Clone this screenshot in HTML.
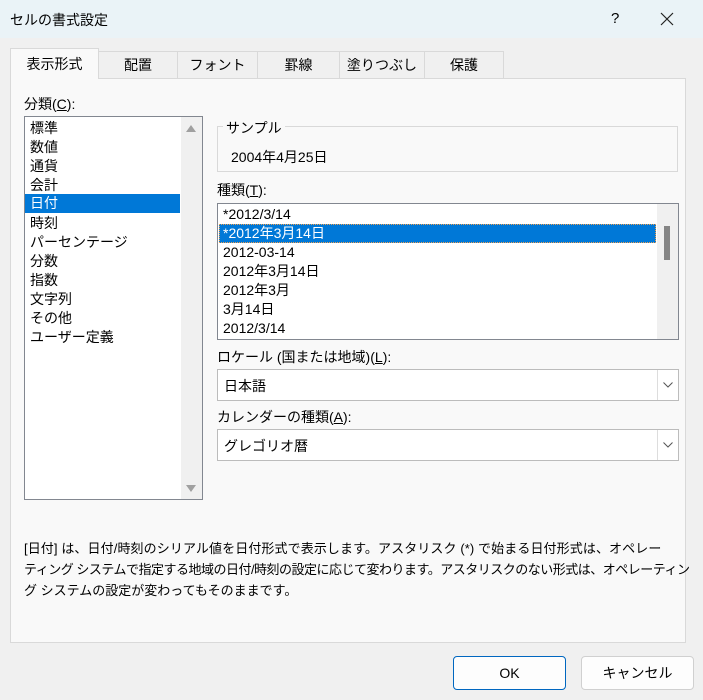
<!DOCTYPE html>
<html><head><meta charset="utf-8"><style>
*{box-sizing:border-box;margin:0;padding:0}
body{width:703px;height:700px;overflow:hidden;background:#f0f0f0;font-family:"Liberation Sans","Noto Sans CJK JP",sans-serif;font-size:14px;color:#000;position:relative}
.a{position:absolute}
.title{left:0;top:0;width:703px;height:38px;background:#eaf3f7}
.tab{top:51px;height:27px;border:1px solid #d9d9d9;border-bottom:none;background:#f0f0f0;text-align:center;line-height:27px;font-size:14px}
.panel{left:10px;top:78px;width:676px;height:565px;background:#f9f9f9;border:1px solid #d9d9d9}
.lst{background:#fff;border:1px solid #828790}
.it{position:absolute;left:5px;height:19px;line-height:19px;white-space:nowrap}
.sel{background:#0078d7;color:#fff}
.btn{top:656px;height:34px;border:1px solid #d0d0d0;background:#fdfdfd;border-radius:4px;text-align:center;line-height:32px}
.combo{left:217px;width:462px;height:32px;background:#fff;border:1px solid #bcbcbc}
</style></head><body>
<div class="a title"></div>
<div class="a" style="left:10px;top:10px;font-size:14px">セルの書式設定</div>
<div class="a" style="left:611px;top:10px;font-size:15px">?</div>
<svg class="a" style="left:660px;top:12px" width="14" height="14"><path d="M1 1L13 13M13 1L1 13" stroke="#222" stroke-width="1.2"/></svg>
<div class="a panel"></div>
<div class="a tab" style="left:98px;width:80px">配置</div>
<div class="a tab" style="left:177px;width:81px">フォント</div>
<div class="a tab" style="left:257px;width:83px">罫線</div>
<div class="a tab" style="left:339px;width:86px">塗りつぶし</div>
<div class="a tab" style="left:424px;width:80px">保護</div>
<div class="a tab" style="left:10px;top:48px;width:89px;height:31px;background:#f9f9f9;line-height:31px">表示形式</div>
<div class="a" style="left:24px;top:94px">分類(<u>C</u>):</div>
<div class="a lst" style="left:24px;top:116px;width:179px;height:384px">
<div class="a" style="left:156px;top:0;width:21px;height:382px;background:#f0f0f0"></div>
<div class="a" style="left:161px;top:8px;width:0;height:0;border-left:5px solid transparent;border-right:5px solid transparent;border-bottom:7px solid #a0a0a0"></div>
<div class="a" style="left:161px;top:368px;width:0;height:0;border-left:5px solid transparent;border-right:5px solid transparent;border-top:7px solid #a0a0a0"></div>
<div class="it" style="top:2px">標準</div>
<div class="it" style="top:21px">数値</div>
<div class="it" style="top:40px">通貨</div>
<div class="it" style="top:59px">会計</div>
<div class="it sel" style="top:77px;left:0;width:155px;padding-left:5px">日付</div>
<div class="it" style="top:97px">時刻</div>
<div class="it" style="top:116px">パーセンテージ</div>
<div class="it" style="top:135px">分数</div>
<div class="it" style="top:154px">指数</div>
<div class="it" style="top:173px">文字列</div>
<div class="it" style="top:192px">その他</div>
<div class="it" style="top:211px">ユーザー定義</div>
</div>
<div class="a" style="left:217px;top:126px;width:461px;height:46px;border:1px solid #d9d9d9"></div>
<div class="a" style="left:223px;top:118px;background:#f9f9f9;padding:0 3px">サンプル</div>
<div class="a" style="left:231px;top:147px">2004年4月25日</div>
<div class="a" style="left:217px;top:180px">種類(<u>T</u>):</div>
<div class="a lst" style="left:217px;top:203px;width:462px;height:137px">
<div class="a" style="left:439px;top:0;width:21px;height:135px;background:#f0f0f0"></div>
<div class="a" style="left:446px;top:22px;width:6px;height:34px;background:#858585"></div>
<div class="it" style="top:1px">*2012/3/14</div>
<div class="it sel" style="top:20px;left:1px;width:437px;padding-left:4px;outline:1px dotted #f0a050;outline-offset:-1px">*2012年3月14日</div>
<div class="it" style="top:39px">2012-03-14</div>
<div class="it" style="top:58px">2012年3月14日</div>
<div class="it" style="top:77px">2012年3月</div>
<div class="it" style="top:96px">3月14日</div>
<div class="it" style="top:115px">2012/3/14</div>
</div>
<div class="a" style="left:217px;top:347px">ロケール (国または地域)(<u>L</u>):</div>
<div class="a combo" style="top:369px"><div class="a" style="left:6px;top:6px">日本語</div><div class="a" style="left:439px;top:0;width:21px;height:30px;border-left:1px solid #ddd"></div><svg class="a" style="left:445px;top:12px" width="10" height="6"><path d="M0.5 0.5L5 5L9.5 0.5" stroke="#555" fill="none"/></svg></div>
<div class="a" style="left:217px;top:407px">カレンダーの種類(<u>A</u>):</div>
<div class="a combo" style="top:429px"><div class="a" style="left:6px;top:6px">グレゴリオ暦</div><div class="a" style="left:439px;top:0;width:21px;height:30px;border-left:1px solid #ddd"></div><svg class="a" style="left:445px;top:12px" width="10" height="6"><path d="M0.5 0.5L5 5L9.5 0.5" stroke="#555" fill="none"/></svg></div>
<div class="a" style="left:24px;top:538px;width:670px;font-size:13px;line-height:21px;white-space:nowrap"><span style="letter-spacing:0.1px">[日付] は、日付/時刻のシリアル値を日付形式で表示します。アスタリスク (*) で始まる日付形式は、オペレー</span><br><span style="letter-spacing:-0.5px">ティング システムで指定する地域の日付/時刻の設定に応じて変わります。アスタリスクのない形式は、オペレーティン</span><br>グ システムの設定が変わってもそのままです。</div>
<div class="a btn" style="left:453px;width:113px;border:1px solid #0067c0">OK</div>
<div class="a btn" style="left:581px;width:113px">キャンセル</div>
</body></html>
